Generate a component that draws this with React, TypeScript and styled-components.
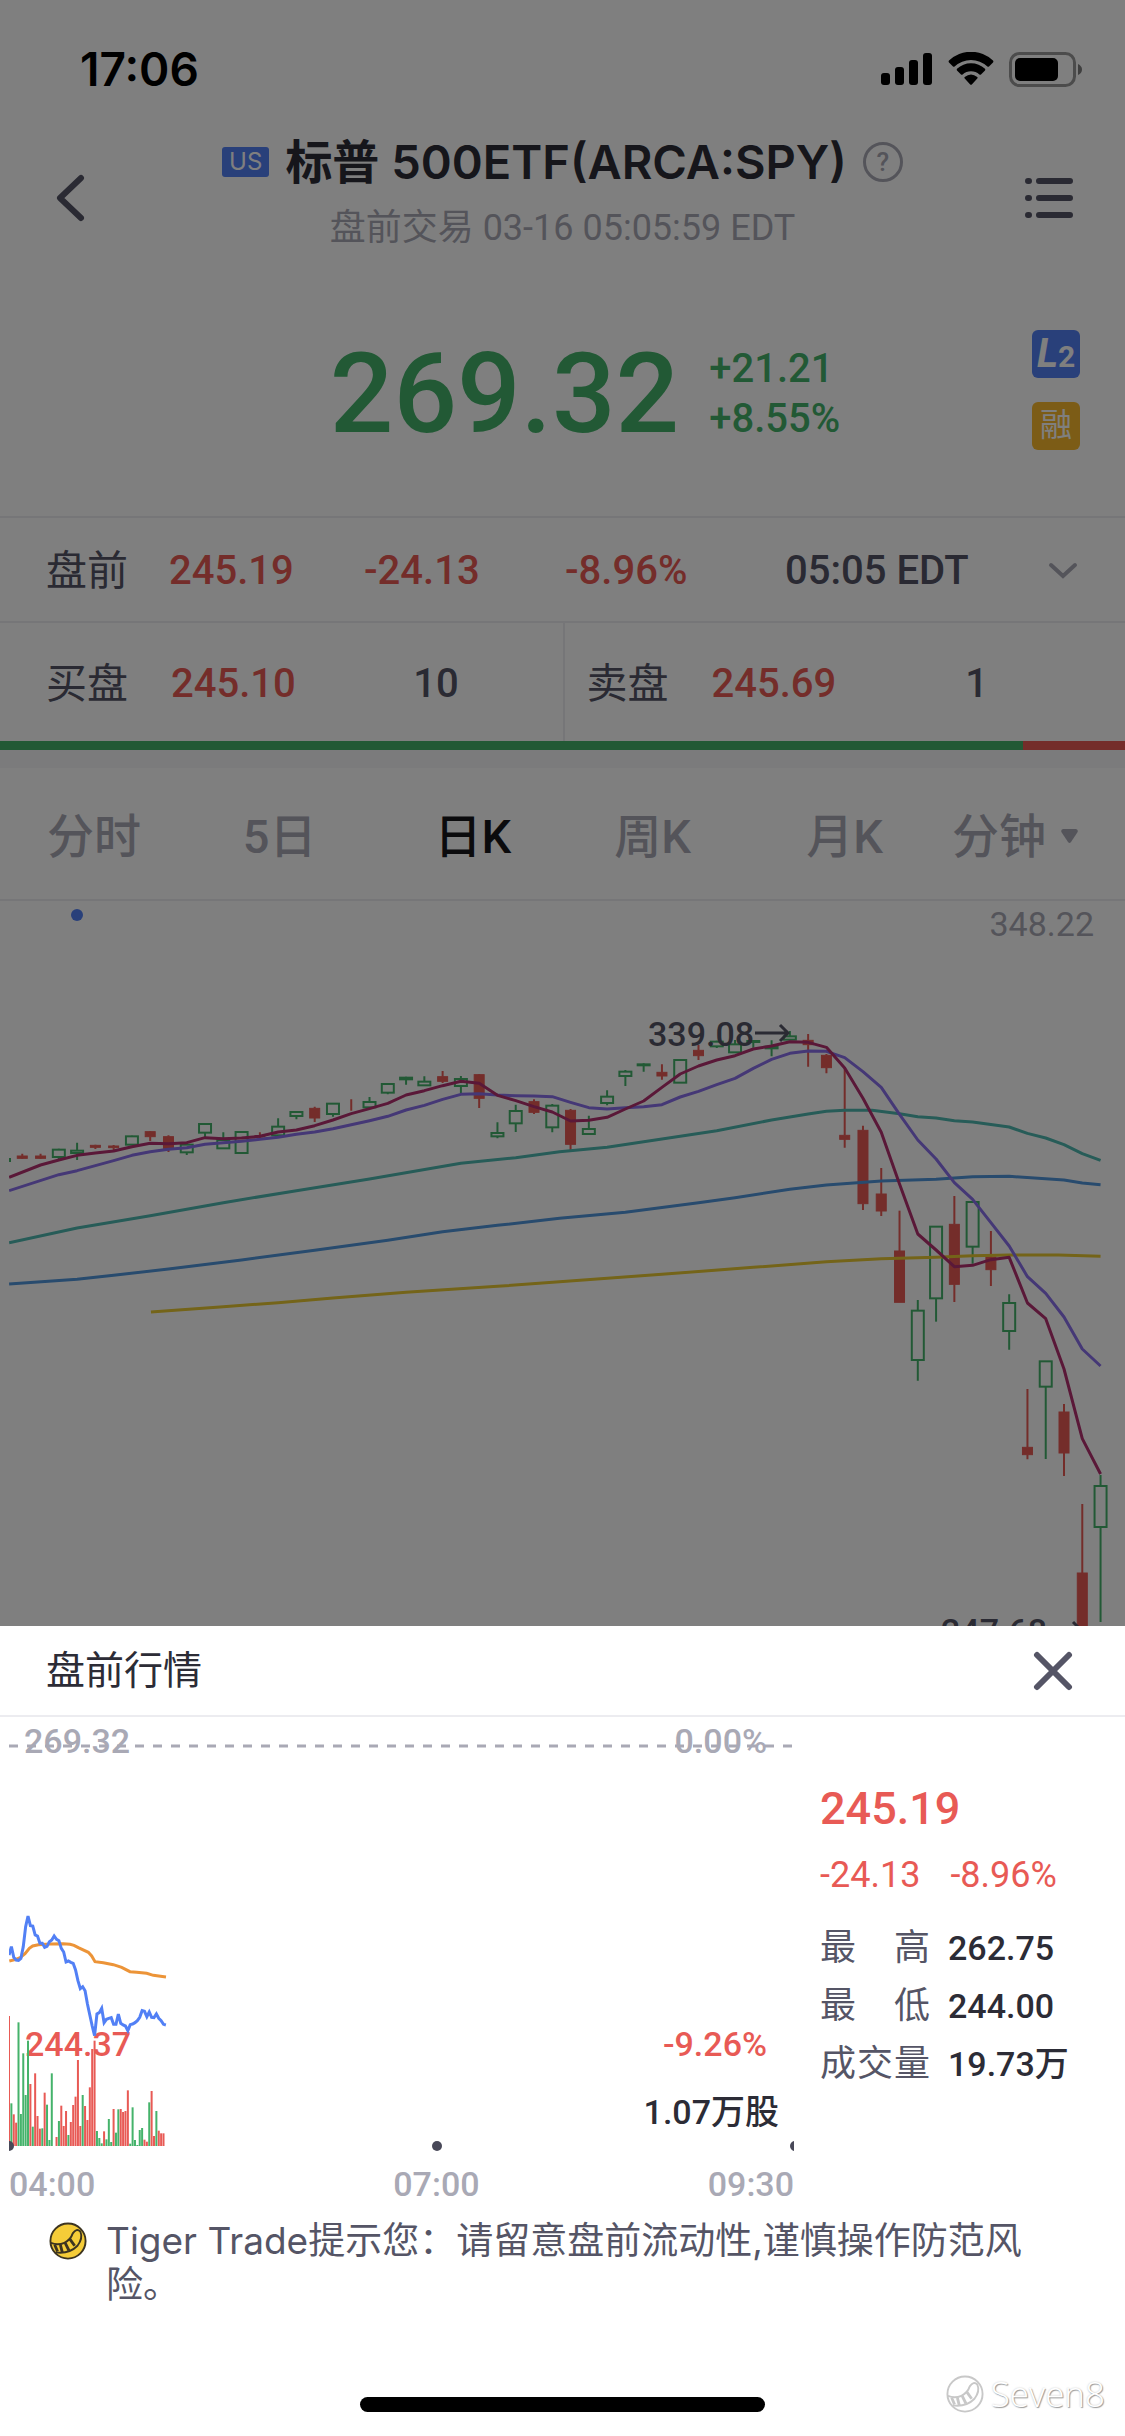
import React from "react";
import styled, { createGlobalStyle } from "styled-components";

const color = {
  up: "#45b36b",
  down: "#e85a55",
  ink: "#2c2c36",
  text: "#555566",
  muted: "#a9a9b5",
  line: "#ececf0",
  blue: "#5280f5",
  gold: "#f8b82c",
};

const numeric = `"Roboto", "Noto Sans CJK SC", sans-serif`;
const system = `"Inter", "Noto Sans CJK SC", sans-serif`;

const GlobalStyle = createGlobalStyle`
  * { box-sizing: border-box; }
  body { margin: 0; background: #fff; font-family: ${numeric}; color: ${color.ink}; }
  button { margin: 0; padding: 0; border: 0; background: none; font: inherit; color: inherit; cursor: pointer; }
  svg { display: block; flex-shrink: 0; }
`;

const Screen = styled.main`
  display: flex;
  flex-direction: column;
  height: 100vh;
  overflow: hidden;
`;

/* Status bar */

const StatusBar = styled.div`
  display: flex;
  align-items: center;
  justify-content: space-between;
  height: 132px;
  padding: 6px 42px 0 80px;
  color: #000;
`;

const Clock = styled.time`
  font: 600 46px/52px ${system};
`;

const StatusIcons = styled.div`
  display: flex;
  align-items: center;
  gap: 15px;
`;

/* Header */

const Header = styled.header`
  display: grid;
  grid-template-columns: 140px 1fr 140px;
  align-items: center;
  height: 132px;
`;

const IconButton = styled.button<{ $align?: "start" | "end" }>`
  display: flex;
  justify-content: ${(p) => (p.$align === "end" ? "flex-end" : "flex-start")};
  padding: ${(p) => (p.$align === "end" ? "16px 52px 16px 0" : "16px 0 16px 52px")};
`;

const TitleBlock = styled.div`
  display: flex;
  flex-direction: column;
  align-items: center;
  align-self: start;
  gap: 14px;
`;

const TitleLine = styled.div`
  display: flex;
  align-items: center;
  gap: 16px;
`;

const Market = styled.span`
  padding: 0 7px;
  border-radius: 3px;
  background: ${color.blue};
  color: #fff;
  font: 400 24px/30px ${system};
`;

const Title = styled.h1`
  margin: 0;
  font: 600 47px/60px ${system};
  white-space: nowrap;
`;

const Help = styled.button`
  width: 40px;
  height: 40px;
  border: 3px solid ${color.muted};
  border-radius: 50%;
  color: ${color.muted};
  font: 500 26px/34px ${numeric};
`;

const Subtitle = styled.p`
  margin: 0;
  color: ${color.muted};
  font-size: 36px;
  line-height: 44px;
`;

/* Quote */

const Quote = styled.section`
  display: flex;
  align-items: center;
  height: 252px;
  padding: 0 45px 0 138px;
`;

const QuoteMain = styled.div`
  display: flex;
  flex: 1;
  align-items: center;
  justify-content: center;
  gap: 30px;
  padding-top: 8px;
  color: ${color.up};
`;

const Price = styled.strong`
  font-weight: 500;
  font-size: 112px;
  line-height: 120px;
`;

const Changes = styled.div`
  display: flex;
  flex-direction: column;
  font-weight: 500;
  font-size: 40px;
  line-height: 50px;
`;

const Badges = styled.div`
  display: flex;
  flex-direction: column;
  gap: 24px;
`;

const Badge = styled.span<{ $bg: string }>`
  display: flex;
  align-items: baseline;
  justify-content: center;
  width: 48px;
  height: 48px;
  border-radius: 6px;
  background: ${(p) => p.$bg};
  color: #fff;
  font-size: 32px;
  line-height: 46px;
`;

const LevelLetter = styled.i`
  font-weight: 700;
  font-size: 40px;
  line-height: 48px;
`;

const LevelDigit = styled.span`
  font-weight: 700;
  font-size: 30px;
`;

/* Quote rows */

const Session = styled.section`
  display: grid;
  grid-template-columns: 123fr 195fr 201fr 220fr 263fr 30fr;
  align-items: center;
  height: 105px;
  padding: 2px 47px 0 46px;
  border-top: 2px solid ${color.line};
  font-size: 40px;
  line-height: 48px;
`;

const Label = styled.span`
  color: ${color.text};
  font-size: 41px;
`;

const Value = styled.span<{ $tone?: string }>`
  color: ${(p) => p.$tone ?? color.ink};
  font-weight: 500;
  white-space: nowrap;
`;

const Orders = styled.section`
  display: grid;
  grid-template-columns: 1fr 1fr;
  height: 120px;
  border-top: 2px solid ${color.line};
`;

const Order = styled.div<{ $ask?: boolean }>`
  display: grid;
  grid-template-columns: 125px 200px 130px;
  align-items: center;
  padding-left: ${(p) => (p.$ask ? 22 : 46)}px;
  padding-top: 4px;
  border-left: ${(p) => (p.$ask ? `2px solid ${color.line}` : "0")};
  font-size: 40px;
  line-height: 48px;
`;

const Size = styled(Value)`
  text-align: center;
`;

const Ratio = styled.div`
  display: flex;
  height: 9px;
  flex-shrink: 0;
`;

const RatioPart = styled.div<{ $share: number; $tone: string }>`
  flex: ${(p) => p.$share};
  background: ${(p) => p.$tone};
`;

const Band = styled.div`
  height: 18px;
  flex-shrink: 0;
  background: #f6f6f8;
`;

/* Period tabs */

const Tabs = styled.nav`
  display: grid;
  grid-template-columns: 196fr 192fr 180fr 192fr 146fr 124fr;
  align-items: center;
  height: 133px;
  flex-shrink: 0;
  padding: 6px 47px 0;
  border-bottom: 2px solid ${color.line};
`;

const Tab = styled.button<{ $active?: boolean }>`
  display: flex;
  align-items: center;
  gap: 15px;
  color: ${(p) => (p.$active ? "#16161a" : color.muted)};
  font-weight: 500;
  font-size: 47px;
  line-height: 60px;
  white-space: nowrap;
`;

const ChartArea = styled.section`
  svg { width: 100%; height: auto; }
`;

/* Bottom sheet */

const Scrim = styled.div`
  position: fixed;
  inset: 0;
  display: flex;
  flex-direction: column;
  justify-content: flex-end;
  background: rgba(0, 0, 0, 0.5);
`;

const Sheet = styled.section`
  background: #fff;
`;

const SheetHeader = styled.header`
  display: flex;
  align-items: center;
  justify-content: space-between;
  height: 91px;
  padding: 0 52px 0 46px;
  border-bottom: 2px solid ${color.line};
`;

const SheetTitle = styled.h2`
  margin: 0;
  font-weight: 400;
  font-size: 39px;
  line-height: 48px;
`;

const SheetBody = styled.div`
  display: grid;
  grid-template-columns: 795fr 330fr;
`;

const Intraday = styled.div`
  svg { width: 100%; height: auto; }
`;

const TimeAxis = styled.div`
  display: grid;
  grid-template-columns: 11fr auto 9fr;
  padding: 2px 1px 0 9px;
  color: ${color.muted};
  font-weight: 500;
  font-size: 34px;
  line-height: 48px;
  & > :last-child { text-align: right; }
`;

const Stats = styled.div`
  padding: 64px 0 0 25px;
  color: ${color.down};
`;

const LastPrice = styled.div`
  font-weight: 500;
  font-size: 45px;
  line-height: 56px;
`;

const LastChange = styled.div`
  display: flex;
  gap: 30px;
  margin: 14px 0 20px;
  font-size: 36px;
  line-height: 48px;
`;

const StatList = styled.dl`
  margin: 0;
  line-height: 58px;
`;

const Stat = styled.div`
  display: flex;
  gap: 18px;
`;

const StatName = styled.dt`
  width: 110px;
  color: ${color.text};
  font-size: 36px;
  text-align: justify;
  text-align-last: justify;
`;

const StatValue = styled.dd`
  margin: 0;
  color: ${color.ink};
  font-weight: 500;
  font-size: 34px;
  white-space: nowrap;
`;

const Tip = styled.div`
  display: flex;
  gap: 19px;
  padding: 11px 90px 0 49px;
  color: ${color.text};
  font: 400 37px/44px ${system};
  p { margin: 0; }
  svg { margin-top: 3px; }
`;

const HomeArea = styled.div`
  display: flex;
  justify-content: center;
  padding: 90px 0 24px;
`;

const HomeBar = styled.div`
  width: 36%;
  height: 15px;
  border-radius: 8px;
  background: #000;
`;

const Watermark = styled.div`
  position: absolute;
  right: 20px;
  bottom: 18px;
  display: flex;
  align-items: center;
  gap: 7px;
  color: #fff;
  font: 300 35px/48px "Open Sans", sans-serif;
  text-shadow: 1px 1px 1px #999, 0 0 2px #c8c8c8;
`;

/* Daily candles: [rises, high, body top, body bottom, low], three units a pixel */

type Candle = [0 | 1, number, number, number, number];

const candles: Candle[] = [
  [1, 535, 537, 543, 545], [0, 521, 528, 535, 537], [0, 521, 528, 535, 537], [1, 506, 509, 531, 538],
  [1, 488, 512, 519, 540], [0, 494, 496, 502, 507], [0, 495, 498, 503, 512], [1, 467, 469, 494, 494],
  [0, 453, 455, 470, 483], [0, 466, 470, 505, 516], [1, 490, 494, 517, 525], [1, 430, 432, 458, 472],
  [1, 457, 480, 505, 507], [1, 454, 456, 519, 520], [0, 457, 467, 471, 474], [1, 415, 440, 466, 468],
  [1, 394, 396, 408, 418], [0, 380, 385, 414, 426], [1, 369, 371, 402, 410], [0, 358, 391, 391, 392],
  [1, 351, 366, 382, 387], [1, 310, 312, 338, 343], [1, 290, 293, 298, 314], [1, 289, 305, 316, 318],
  [0, 273, 290, 304, 309], [1, 288, 297, 318, 340], [0, 282, 284, 355, 384], [1, 427, 459, 469, 475],
  [1, 374, 393, 430, 456], [0, 358, 365, 397, 402], [1, 372, 377, 442, 457], [0, 387, 391, 493, 511],
  [1, 407, 447, 462, 464], [1, 331, 350, 369, 376], [1, 270, 275, 288, 318], [1, 250, 253, 256, 275],
  [0, 253, 277, 288, 299], [1, 238, 240, 308, 308], [0, 194, 211, 227, 240], [1, 182, 185, 199, 204],
  [1, 180, 193, 217, 218], [1, 181, 183, 185, 203], [1, 181, 200, 205, 229], [1, 153, 169, 179, 181],
  [0, 162, 181, 194, 260], [0, 222, 226, 263, 280], [0, 264, 466, 478, 503], [0, 437, 451, 671, 690],
  [0, 564, 642, 693, 708], [0, 692, 813, 967, 967], [1, 960, 992, 1140, 1202], [1, 740, 740, 955, 1025],
  [0, 648, 733, 913, 966], [1, 664, 666, 800, 851], [0, 753, 831, 869, 918], [1, 943, 969, 1053, 1109],
  [0, 1227, 1402, 1424, 1438], [1, 1143, 1144, 1220, 1437], [0, 1272, 1296, 1419, 1488],
  [0, 1572, 1779, 1990, 1990], [1, 1485, 1518, 1641, 1926],
];

/* Moving averages: [day, value] */

type Average = { tone: string; points: [number, number][] };

const from = (start: number, values: number[]): [number, number][] =>
  values.map((v, i) => [start + i, v]);

const averages: Average[] = [
  {
    tone: "#e8c832",
    points: [[8.04, 996], [12, 980], [15, 968], [18, 954], [22, 937], [27, 919], [30.4, 905], [36, 883], [41, 862],
      [45, 845], [48, 836], [51, 832], [53, 827], [55, 825], [57.7, 825], [60, 829]],
  },
  {
    tone: "#5096dc",
    points: [[0.28, 912], [4, 898], [6, 886], [9, 867], [13, 840], [17, 811], [21, 781], [24, 755], [27, 736],
      [30.4, 715], [34, 697], [38, 668], [40, 653], [43, 628], [45, 615], [48, 603], [51, 598], [53, 590],
      [55, 589], [58, 600], [59, 609], [60, 614]],
  },
  {
    tone: "#4fb8b0",
    points: [[0.28, 788], [4, 744], [8, 707], [12, 668], [16, 632], [20, 597], [25, 550], [28, 533], [30.4, 515],
      [33, 502], [35, 485], [39, 452], [42, 420], [44, 402], [45, 394], [46, 391], [47.5, 391], [49, 401],
      [50, 410], [51, 414], [52, 422], [53, 426], [55, 441], [56, 460], [57, 474], [58, 494], [59, 521], [60, 541]],
  },
  {
    tone: "#8a70ec",
    points: [[0.28, 632], ...from(3, [584, 572, 557, 542, 526, 515, 508, 503, 493, 488, 484, 478, 472, 463, 456, 446,
      434, 422, 409, 390, 376, 358, 343, 341, 345, 347, 348, 350, 367, 383, 387, 383, 380, 374, 351, 334, 314, 295,
      265, 238, 220, 213, 214, 233, 275, 322, 403, 480, 537, 608, 658, 728, 798, 890, 940, 1011, 1107, 1158])],
  },
  {
    tone: "#b43070",
    points: [[0.28, 592], ...from(2, [555, 540, 526, 519, 513, 500, 490, 491, 488, 473, 476, 474, 469, 456, 450, 437,
      420, 401, 386, 370, 345, 332, 317, 304, 310, 346, 362, 380, 396, 423, 421, 412, 387, 363, 322, 282, 258, 240,
      227, 207, 198, 185, 187, 202, 264, 355, 457, 612, 762, 810, 860, 856, 839, 832, 969, 1016, 1167, 1376, 1482])],
  },
];

const dayX = (day: number) => 4 + day * 18.276;
const dayY = (value: number) => 79 + value / 3;

function DailyChart() {
  return (
    <svg viewBox="0 0 1125 740" role="img" aria-label="日K">
      <clipPath id="plot"><rect x="9" y="0" width="1116" height="740" /></clipPath>
      <circle cx="77" cy="14" r="6" fill={color.blue} />
      <g clipPath="url(#plot)">
        {candles.map(([rises, high, top, bottom, low], i) => {
          const x = dayX(i);
          const tone = rises ? color.up : color.down;
          const height = Math.max(dayY(bottom) - dayY(top), 1);
          return (
            <g key={i} stroke={tone} strokeWidth="2">
              <path d={`M${x} ${dayY(high)}V${dayY(top)}M${x} ${dayY(bottom)}V${dayY(low)}`} />
              {i !== 19 && (
                <rect
                  x={x - (rises ? 6 : 5)} y={dayY(top)} width={rises ? 12 : 10} height={height}
                  strokeWidth={rises ? 2 : 1} fill={rises ? "none" : tone}
                />
              )}
            </g>
          );
        })}
        {averages.map(({ tone, points }) => (
          <polyline
            key={tone} fill="none" stroke={tone} strokeWidth="3" strokeLinejoin="round"
            points={points.map(([d, v]) => `${dayX(d)},${dayY(v)}`).join(" ")}
          />
        ))}
      </g>
      <g fontFamily="Roboto" fontSize="34">
        <text x="1094" y="35" textAnchor="end" fill={color.muted}>348.22</text>
        <text x="648" y="145" fontWeight="500" fill={color.text}>339.08</text>
        <text x="941" y="742" fontWeight="500" fill={color.text}>247.68</text>
      </g>
      <path d="M755 132H788M780 124L788 132L780 140M1048 729H1081M1073 721L1081 729" fill="none" stroke={color.text} strokeWidth="3" />
    </svg>
  );
}

/* Pre-market minutes */

const minutePrice = [
  225, 200, 232, 240, 241, 235, 200, 140, 108, 137, 138, 165, 168, 190, 190, 202, 199, 185, 180, 168, 178, 182, 205,
  216, 246, 243, 247, 250, 270, 302, 326, 320, 332, 372, 405, 438, 467, 402, 398, 385, 428, 418, 415, 413, 433, 433,
  402, 430, 435, 438, 452, 434, 432, 428, 422, 412, 392, 394, 410, 396, 412, 413, 402, 415, 422, 433, 435,
];

const averagePrice: [number, number][] = [
  [28, 243], [48, 238], [62, 232], [75, 221], [88, 205], [98, 198], [115, 194], [150, 192], [190, 191], [210, 193],
  [222, 196], [235, 203], [265, 217], [275, 228], [285, 245], [310, 248], [340, 254], [365, 262], [390, 275],
  [410, 277], [440, 280], [460, 286], [498, 291],
];

/* Volume bar tops; a negative value is a falling minute */
const volume = [
  -408, 670, -703, -728, 427, 702, 520, 645, 482, -612, 740, -580, -708, -746, 745, -638, 674, 780, 580, 798, -771,
  723, -677, -738, -693, 765, -726, -675, -650, -540, -738, 645, -678, -720, -622, -507, -482, 753, 774, 790, -754,
  778, 717, 786, -687, 758, 688, -687, -696, -693, -631, 791, 682, 780, 795, 750, 744, -779, -785, 667, -633, -768,
  693, -752, -760, -760,
];

const minuteX = (i: number) => 9 + i * 2.377;
const minuteY = (v: number) => 163 + v / 3;

function IntradayChart() {
  return (
    <svg viewBox="0 0 795 441" role="img" aria-label="盘前分时">
      <clipPath id="minutes"><rect x="9" y="0" width="785" height="441" /></clipPath>
      <path d="M9 29H795" stroke={color.muted} strokeWidth="3" strokeDasharray="9 9" />
      <g fontFamily="Roboto" fontSize="34" fontWeight="500">
        <text x="24" y="36" fill={color.muted}>269.32</text>
        <text x="767" y="36" textAnchor="end" fill={color.muted}>0.00%</text>
        <text x="25" y="339" fill={color.down}>244.37</text>
        <text x="767" y="339" textAnchor="end" fill={color.down}>-9.26%</text>
        <text x="779" y="407" textAnchor="end" fill={color.ink} fontFamily="Roboto, Noto Sans CJK SC">1.07万股</text>
      </g>
      <g clipPath="url(#minutes)">
        {volume.map((v, i) => (
          <rect
            key={i} x={minuteX(i) - 1} y={minuteY(Math.abs(v))} width="2" height={429 - minuteY(Math.abs(v))}
            fill={v < 0 ? color.down : color.up}
          />
        ))}
        <polyline
          points={averagePrice.map(([x, v]) => `${x / 3},${minuteY(v)}`).join(" ")}
          fill="none" stroke="#ec9438" strokeWidth="3"
        />
        <polyline
          points={minutePrice.map((v, i) => `${minuteX(i)},${minuteY(v)}`).join(" ")}
          fill="none" stroke={color.blue} strokeWidth="3"
        />
        <g fill="#484858">
          <circle cx="9" cy="429" r="5" />
          <circle cx="437" cy="429" r="5" />
          <circle cx="795" cy="429" r="5" />
        </g>
      </g>
    </svg>
  );
}

/* Icons */

const SignalIcon = () => (
  <svg width="52" height="34" viewBox="0 0 52 34">
    <rect x="0" y="21" width="9" height="12" rx="3" />
    <rect x="14" y="15" width="9" height="18" rx="3" />
    <rect x="28" y="8" width="9" height="25" rx="3" />
    <rect x="42" y="1" width="9" height="32" rx="3" />
  </svg>
);

const WifiIcon = () => (
  <svg width="46" height="34" viewBox="0 0 46 34">
    <path d="M1 8.500A32 32 0 0 1 45 8.500Q45.800 9.500 45 10.500L41 14.500Q40.200 15.200 39.400 14.500A24 24 0 0 0 6.600 14.500Q5.800 15.200 5 14.500L1 10.500Q0.200 9.500 1 8.500Z" />
    <path d="M9 16.800A20.500 20.500 0 0 1 37 16.800Q37.700 17.700 37 18.500L33 22.500Q32.200 23.200 31.400 22.500A12.500 12.500 0 0 0 14.600 22.500Q13.800 23.200 13 22.500L9 18.500Q8.300 17.700 9 16.800Z" />
    <path d="M16.700 25Q23 20 29.300 25Q30.100 25.800 29.300 26.600L23.800 32.400Q23 33.200 22.200 32.400L16.700 26.600Q15.900 25.800 16.700 25Z" />
  </svg>
);

const BatteryIcon = () => (
  <svg width="74" height="35" viewBox="0 0 74 35">
    <rect x="1.500" y="1.500" width="64" height="32" rx="9" fill="none" stroke="#000" strokeOpacity="0.4" strokeWidth="3" />
    <rect x="6" y="6" width="43" height="23" rx="5" />
    <path d="M69 12Q73 14 73 17.500T69 23Z" fillOpacity="0.5" />
  </svg>
);

const BackIcon = () => (
  <svg width="34" height="48" viewBox="0 0 34 48">
    <path d="M29 4L8 24L29 44" fill="none" stroke={color.text} strokeWidth="6" strokeLinecap="round" strokeLinejoin="round" />
  </svg>
);

const ListIcon = () => (
  <svg width="48" height="44" viewBox="0 0 48 44" stroke={color.text} strokeWidth="6" strokeLinecap="round">
    <path d="M3 5H4M14 5H45M3 22H4M14 22H45M3 39H4M14 39H45" />
  </svg>
);

const ChevronIcon = () => (
  <svg width="30" height="18" viewBox="0 0 30 18">
    <path d="M3 3L15 14L27 3" fill="none" stroke={color.muted} strokeWidth="4" strokeLinecap="round" />
  </svg>
);

const CaretIcon = () => (
  <svg width="17" height="15" viewBox="0 0 17 15">
    <path d="M2 0H15Q18 1 16 4L10 13Q8.500 15 7 13L1 4Q-1 1 2 0Z" fill={color.muted} />
  </svg>
);

const CloseIcon = () => (
  <svg width="40" height="40" viewBox="0 0 40 40">
    <path d="M4 4L36 36M36 4L4 36" stroke={color.text} strokeWidth="6" strokeLinecap="round" />
  </svg>
);

const TailMark = ({ fill, stroke }: { fill: string; stroke: string }) => (
  <svg width="38" height="38" viewBox="0 0 40 40" fill="none" stroke={stroke} strokeWidth="2">
    <circle cx="20" cy="20" r="18.500" fill={fill} />
    <path d="M2 22C12 26 22 21 25 12Q29 6 33 10Q36 17 30 25Q21 34 7 32" />
    <path d="M6 24L9 31M12 24L14 32M17 22L21 30M22 18L27 25" strokeWidth="3" />
  </svg>
);

export default function App() {
  return (
    <>
      <GlobalStyle />
      <Screen>
        <StatusBar>
          <Clock>17:06</Clock>
          <StatusIcons>
            <SignalIcon />
            <WifiIcon />
            <BatteryIcon />
          </StatusIcons>
        </StatusBar>
        <Header>
          <IconButton aria-label="返回"><BackIcon /></IconButton>
          <TitleBlock>
            <TitleLine>
              <Market>US</Market>
              <Title>标普 500ETF(ARCA:SPY)</Title>
              <Help aria-label="帮助">?</Help>
            </TitleLine>
            <Subtitle>盘前交易 03-16 05:05:59 EDT</Subtitle>
          </TitleBlock>
          <IconButton $align="end" aria-label="列表"><ListIcon /></IconButton>
        </Header>
        <Quote>
          <QuoteMain>
            <Price>269.32</Price>
            <Changes>
              <span>+21.21</span>
              <span>+8.55%</span>
            </Changes>
          </QuoteMain>
          <Badges>
            <Badge $bg={color.blue}><LevelLetter>L</LevelLetter><LevelDigit>2</LevelDigit></Badge>
            <Badge $bg={color.gold}>融</Badge>
          </Badges>
        </Quote>
        <Session>
          <Label>盘前</Label>
          <Value $tone={color.down}>245.19</Value>
          <Value $tone={color.down}>-24.13</Value>
          <Value $tone={color.down}>-8.96%</Value>
          <Value $tone={color.text}>05:05 EDT</Value>
          <button aria-label="展开"><ChevronIcon /></button>
        </Session>
        <Orders>
          <Order>
            <Label>买盘</Label>
            <Value $tone={color.down}>245.10</Value>
            <Size $tone={color.text}>10</Size>
          </Order>
          <Order $ask>
            <Label>卖盘</Label>
            <Value $tone={color.down}>245.69</Value>
            <Size $tone={color.text}>1</Size>
          </Order>
        </Orders>
        <Ratio>
          <RatioPart $share={10} $tone={color.up} />
          <RatioPart $share={1} $tone={color.down} />
        </Ratio>
        <Band />
        <Tabs>
          <Tab>分时</Tab>
          <Tab>5日</Tab>
          <Tab $active aria-current="true">日K</Tab>
          <Tab>周K</Tab>
          <Tab>月K</Tab>
          <Tab>分钟<CaretIcon /></Tab>
        </Tabs>
        <ChartArea><DailyChart /></ChartArea>
      </Screen>
      <Scrim>
        <Sheet role="dialog" aria-label="盘前行情">
          <SheetHeader>
            <SheetTitle>盘前行情</SheetTitle>
            <button aria-label="关闭"><CloseIcon /></button>
          </SheetHeader>
          <SheetBody>
            <Intraday>
              <IntradayChart />
              <TimeAxis>
                <span>04:00</span>
                <span>07:00</span>
                <span>09:30</span>
              </TimeAxis>
            </Intraday>
            <Stats>
              <LastPrice>245.19</LastPrice>
              <LastChange>
                <span>-24.13</span>
                <span>-8.96%</span>
              </LastChange>
              <StatList>
                <Stat><StatName>最 高</StatName><StatValue>262.75</StatValue></Stat>
                <Stat><StatName>最 低</StatName><StatValue>244.00</StatValue></Stat>
                <Stat><StatName>成交量</StatName><StatValue>19.73万</StatValue></Stat>
              </StatList>
            </Stats>
          </SheetBody>
          <Tip>
            <TailMark fill="#f5cc38" stroke="#3c3420" />
            <p>Tiger Trade提示您：请留意盘前流动性,谨慎操作防范风险。</p>
          </Tip>
          <HomeArea><HomeBar /></HomeArea>
        </Sheet>
        <Watermark>
          <TailMark fill="#fff" stroke="#c8c8c8" />
          <span>Seven8</span>
        </Watermark>
      </Scrim>
    </>
  );
}
